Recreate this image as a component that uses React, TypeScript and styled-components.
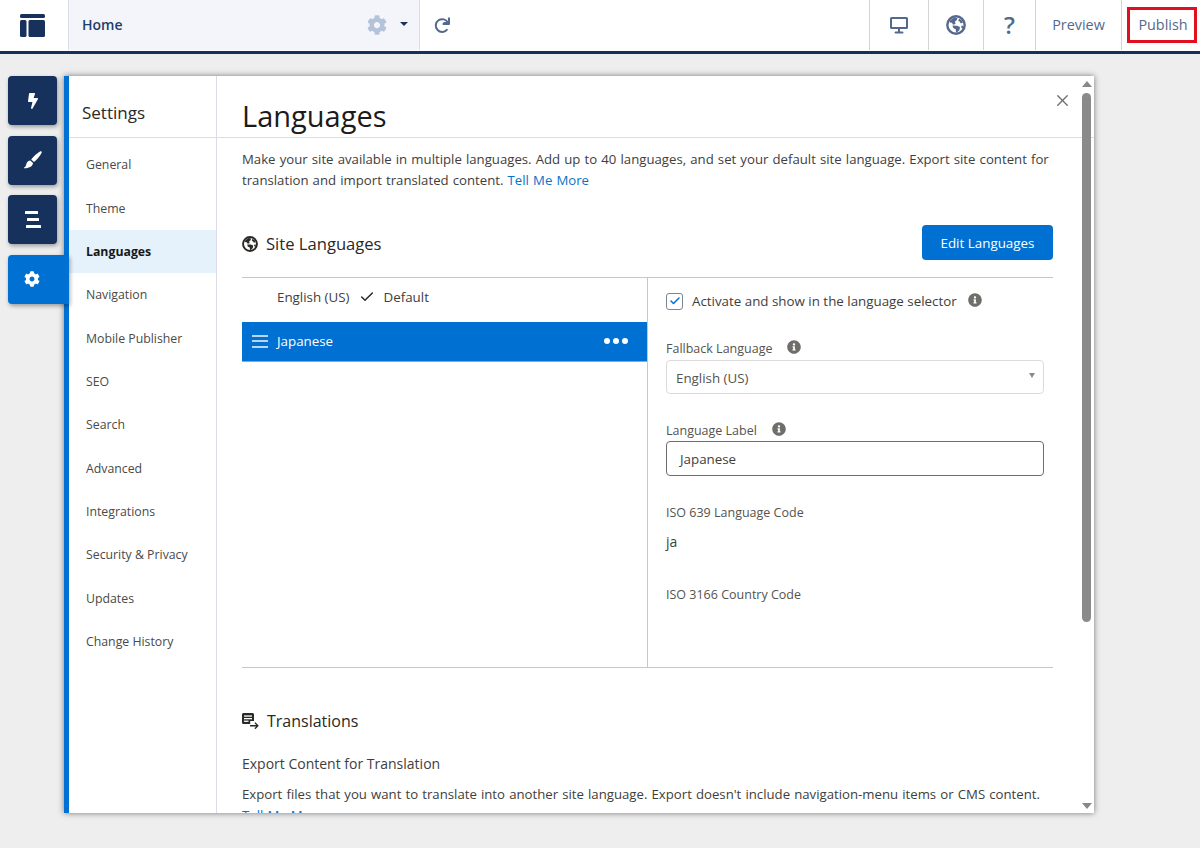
import React from 'react'
import styled, { createGlobalStyle } from 'styled-components'
import { FaBolt, FaCog, FaInfoCircle } from 'react-icons/fa'
import { Check, X } from 'lucide-react'

const GlobalStyle = createGlobalStyle`
  html, body {
    margin: 0;
    padding: 0;
    background: #eeeeee;
    font-family: "Open Sans", "Noto Sans", sans-serif;
    color: #3e3e3c;
  }
  * { box-sizing: border-box; }
`

const navItems = [
  'General',
  'Theme',
  'Languages',
  'Navigation',
  'Mobile Publisher',
  'SEO',
  'Search',
  'Advanced',
  'Integrations',
  'Security & Privacy',
  'Updates',
  'Change History',
]

function LayoutLogo() {
  return (
    <svg width="25" height="23" viewBox="0 0 25 23" fill="#16325c">
      <rect x="0" y="0" width="25" height="4" rx="1.5" />
      <rect x="0" y="6" width="6.5" height="17" rx="1.5" />
      <rect x="8.5" y="6" width="16.5" height="17" rx="1.5" />
    </svg>
  )
}

function RedoIcon() {
  return (
    <svg width="17" height="17" viewBox="0 0 17 17" fill="none" stroke="#54698d" strokeWidth="2">
      <path d="M13.4 12.2A6.400 6.400 0 1 1 14 6H9.500" />
      <path d="M15 1.200V7H9.400" strokeLinecap="round" strokeLinejoin="round" />
    </svg>
  )
}

function GlobeIcon({ size, color }: { size: number; color: string }) {
  return (
    <svg width={size} height={size} viewBox="0 0 20 20" fill={color}>
      <circle cx="10" cy="10" r="8.700" fill="none" stroke={color} strokeWidth="2.400" />
      <path d="M4 5.500L8 2.500l3.500.5-1 2.500L9 6.500 9.500 9 7 9.800l-1-2-2.500-.3z" />
      <path d="M13 3.500l3.500 2.500.2 2-2.200.2-.7-1.700-1.500-.3z" />
      <path d="M6.500 10.500l4.500.2 3 1.300-.5 3-2.500 2.500-1-.2-.3-3-2.500-1.200z" />
      <path d="M15.500 10.500l2 .5-.8 3-1.500-1.500z" />
    </svg>
  )
}

function MonitorIcon() {
  return (
    <svg width="18" height="17" viewBox="0 0 18 17" fill="#54698d">
      <path d="M1.500 0h15A1.500 1.500 0 0 1 18 1.500v9a1.500 1.500 0 0 1-1.500 1.500h-15A1.500 1.500 0 0 1 0 10.500v-9A1.500 1.500 0 0 1 1.500 0zM2 2v8h14V2z" fillRule="evenodd" />
      <rect x="8" y="12" width="2" height="3" />
      <rect x="4.500" y="14.500" width="9" height="2" rx="1" />
    </svg>
  )
}

function BrushIcon() {
  return (
    <svg width="18" height="18" viewBox="0 0 18 18" fill="#fff">
      <path d="M17.400.5c.5.4.4 1.100 0 1.800-1.600 3-4.200 6.300-7.400 8.700L7.200 8.600C9.800 5.300 13.300 2.200 16 .6c.5-.3 1-.4 1.400-.1z" />
      <path d="M6.300 9.500l2.700 2.400c-.2 2.900-3 5.100-8.600 5.300-.5 0-.6-.5-.2-.8 1.800-1.100 1.700-2.400 2.300-4 .6-1.600 2-2.700 3.800-2.900z" />
    </svg>
  )
}

function StackIcon() {
  return (
    <svg width="16" height="17" viewBox="0 0 16 17" fill="#fff">
      <rect x="0" y="0" width="13" height="3" rx="0.5" />
      <rect x="2" y="7" width="12" height="3" rx="0.5" />
      <rect x="1" y="14" width="15" height="3" rx="0.5" />
    </svg>
  )
}

function TranslateIcon() {
  return (
    <svg width="17" height="16" viewBox="0 0 17 16" fill="#2b2826">
      <path d="M1.500 0h9A1.500 1.500 0 0 1 12 1.500V8H8.200v3H1.500A1.500 1.500 0 0 1 0 9.500v-8A1.500 1.500 0 0 1 1.500 0z" />
      <rect x="2" y="2.400" width="8" height="1.300" fill="#fff" />
      <rect x="2" y="5" width="8" height="1.300" fill="#fff" />
      <rect x="2" y="7.600" width="4.500" height="1.300" fill="#fff" />
      <path d="M8 12h6.200l-1.800-1.900 1-.9 3.400 3.500-3.400 3.500-1-.9 1.800-1.900H8z" />
    </svg>
  )
}

function Info() {
  return (
    <InfoMark>
      <FaInfoCircle size={14} />
    </InfoMark>
  )
}

export default function App() {
  return (
    <Page>
      <GlobalStyle />
      <TopBar>
        <LogoCell>
          <LayoutLogo />
        </LogoCell>
        <HomeCell>
          <HomeTitle>Home</HomeTitle>
          <FaCog size={20} color="#b4c3d9" />
          <Caret />
        </HomeCell>
        <RedoCell>
          <RedoIcon />
        </RedoCell>
        <BarSpacer />
        <BarCell $width={59}>
          <MonitorIcon />
        </BarCell>
        <BarCell $width={55}>
          <GlobeIcon size={20} color="#54698d" />
        </BarCell>
        <BarCell $width={52}>
          <QuestionMark>?</QuestionMark>
        </BarCell>
        <BarCell $width={86}>
          <BarLabel>Preview</BarLabel>
        </BarCell>
        <PublishCell>
          <PublishBox>
            <BarLabel>Publish</BarLabel>
          </PublishBox>
        </PublishCell>
      </TopBar>

      <Workspace>
        <TabRail>
          <RailTab>
            <FaBolt size={16} color="#fff" />
          </RailTab>
          <RailTab>
            <BrushIcon />
          </RailTab>
          <RailTab>
            <StackIcon />
          </RailTab>
          <RailTab $active>
            <FaCog size={16} color="#fff" />
          </RailTab>
        </TabRail>

        <Panel>
          <SideNav>
            <SideTitle>Settings</SideTitle>
            <NavList>
              {navItems.map((item) => (
                <NavItem key={item} $active={item === 'Languages'}>
                  {item}
                </NavItem>
              ))}
            </NavList>
          </SideNav>

          <Main>
            <PageHeader>
              <PageTitle>Languages</PageTitle>
              <CloseButton>
                <X size={19} strokeWidth={1.7} color="#706e6b" />
              </CloseButton>
            </PageHeader>
            <Body>
              <Intro>
                Make your site available in multiple languages. Add up to 40 languages, and set your default site
                language. Export site content for translation and import translated content.{' '}
                <TextLink>Tell Me More</TextLink>
              </Intro>

              <SectionHeader>
                <SectionTitle>
                  <GlobeIcon size={16} color="#2b2826" />
                  Site Languages
                </SectionTitle>
                <PrimaryButton>Edit Languages</PrimaryButton>
              </SectionHeader>

              <LanguageGrid>
                <LanguageList>
                  <DefaultRow>
                    English (US)
                    <Check size={16} strokeWidth={2.2} color="#2b2826" />
                    Default
                  </DefaultRow>
                  <SelectedRow>
                    <DragHandle>
                      <span />
                      <span />
                      <span />
                    </DragHandle>
                    <SelectedName>Japanese</SelectedName>
                    <Dots>
                      <span />
                      <span />
                      <span />
                    </Dots>
                  </SelectedRow>
                </LanguageList>

                <DetailPane>
                  <CheckRow>
                    <CheckBox>
                      <Check size={12} strokeWidth={3} color="#0070d2" />
                    </CheckBox>
                    <CheckText>Activate and show in the language selector</CheckText>
                    <Info />
                  </CheckRow>

                  <FallbackLabel>
                    Fallback Language
                    <Info />
                  </FallbackLabel>
                  <SelectBox>
                    English (US)
                    <SelectCaret />
                  </SelectBox>

                  <LabelRow>
                    Language Label
                    <Info />
                  </LabelRow>
                  <TextField>Japanese</TextField>

                  <IsoLabel>ISO 639 Language Code</IsoLabel>
                  <IsoValue>ja</IsoValue>
                  <IsoCountry>ISO 3166 Country Code</IsoCountry>
                </DetailPane>
              </LanguageGrid>

              <TranslationsTitle>
                <TranslateIcon />
                Translations
              </TranslationsTitle>
              <ExportTitle>Export Content for Translation</ExportTitle>
              <ExportText>
                Export files that you want to translate into another site language. Export doesn't include
                navigation-menu items or CMS content. <TextLink>Tell Me More</TextLink>
              </ExportText>
            </Body>
          </Main>

          <ScrollBar>
            <ScrollUp />
            <ScrollThumb />
            <ScrollDown />
          </ScrollBar>
        </Panel>
      </Workspace>
    </Page>
  )
}

const Page = styled.div`
  width: 1200px;
  height: 848px;
  overflow: hidden;
  background: #eeeeee;
`

const TopBar = styled.header`
  display: flex;
  height: 54px;
  padding-bottom: 1px;
  background: #fff;
  border-bottom: 3px solid #16325c;
`

const LogoCell = styled.div`
  display: flex;
  align-items: center;
  justify-content: center;
  width: 69px;
  padding-right: 4px;
  border-right: 1px solid #d8dde6;
`

const HomeCell = styled.div`
  display: flex;
  align-items: center;
  width: 351px;
  padding: 0 11px 0 13px;
  background: #f3f5fa;
  border-right: 1px solid #d8dde6;
`

const HomeTitle = styled.span`
  flex: 1;
  padding-bottom: 2px;
  font-size: 14px;
  font-weight: 600;
  color: #1f3d69;
`

const Caret = styled.span`
  width: 0;
  height: 0;
  margin-left: 13px;
  margin-top: -3px;
  border-left: 4px solid transparent;
  border-right: 4px solid transparent;
  border-top: 4px solid #16325c;
`

const RedoCell = styled.div`
  display: flex;
  align-items: center;
  padding-left: 14px;
  width: 44px;
`

const BarSpacer = styled.div`
  flex: 1;
`

const BarCell = styled.div<{ $width: number }>`
  display: flex;
  align-items: center;
  justify-content: center;
  width: ${(p) => p.$width}px;
  border-left: 1px solid #d4d4d4;
`

const BarLabel = styled.span`
  padding-bottom: 2px;
  font-size: 14.4px;
  color: #54698d;
`

const QuestionMark = styled.span`
  font-size: 24px;
  font-weight: 600;
  line-height: 1;
  color: #54698d;
`

const PublishCell = styled.div`
  display: flex;
  align-items: center;
  justify-content: flex-end;
  width: 79px;
  padding-right: 3px;
  border-left: 1px solid #d4d4d4;
`

const PublishBox = styled.div`
  display: flex;
  align-items: center;
  justify-content: center;
  width: 70px;
  height: 36px;
  padding-left: 2px;
  border: 3px solid #e01020;
`

const Workspace = styled.div`
  display: flex;
  padding: 22px 0 0 8px;
`

const TabRail = styled.nav`
  position: relative;
  z-index: 1;
  display: flex;
  flex-direction: column;
  gap: 10.5px;
  width: 56px;
`

const RailTab = styled.div<{ $active?: boolean }>`
  display: flex;
  align-items: center;
  justify-content: center;
  width: ${(p) => (p.$active ? '61px' : '49px')};
  height: 49px;
  padding-right: ${(p) => (p.$active ? '13px' : '0')};
  background: ${(p) => (p.$active ? '#0070d2' : '#16325c')};
  border-radius: ${(p) => (p.$active ? '4px 0 0 4px' : '4px')};
  box-shadow: 1px 2px 4px rgba(0, 0, 0, 0.35);
`

const Panel = styled.section`
  position: relative;
  display: flex;
  width: 1030px;
  height: 737px;
  overflow: hidden;
  background: #fff;
  border-left: 5px solid #0070d2;
  box-shadow: 0 0 6px rgba(0, 0, 0, 0.5);
`

const SideNav = styled.aside`
  flex: none;
  width: 148px;
  border-right: 1px solid #dddbe5;
`

const SideTitle = styled.div`
  display: flex;
  align-items: center;
  height: 62px;
  padding: 12px 0 0 13px;
  font-size: 17px;
  color: #2b2826;
  border-bottom: 1px solid #dddbe5;
`

const NavList = styled.div`
  padding-top: 5px;
`

const NavItem = styled.div<{ $active?: boolean }>`
  display: flex;
  align-items: center;
  height: 43.36px;
  padding-left: 17px;
  font-size: 12.3px;
  font-weight: ${(p) => (p.$active ? 700 : 400)};
  color: ${(p) => (p.$active ? '#181818' : '#4a4a48')};
  background: ${(p) => (p.$active ? '#e5f1fb' : 'transparent')};
`

const Main = styled.main`
  flex: 1;
  min-width: 0;
`

const PageHeader = styled.div`
  position: relative;
  height: 62px;
  padding: 20px 0 0 25px;
  border-bottom: 1px solid #dddbe5;
`

const PageTitle = styled.h1`
  margin: 0;
  font-size: 29px;
  font-weight: 400;
  line-height: 40px;
  color: #1c1b1a;
`

const CloseButton = styled.div`
  position: absolute;
  top: 15px;
  right: 22px;
  display: flex;
`

const Body = styled.div`
  width: 836px;
  padding: 11px 0 0 25px;
`

const Intro = styled.p`
  margin: 0;
  width: 811px;
  font-size: 13.2px;
  word-spacing: 0.7px;
  line-height: 21px;
  color: #3e3e3c;
`

const TextLink = styled.span`
  color: #0b72c6;
`

const SectionHeader = styled.div`
  display: flex;
  align-items: center;
  justify-content: space-between;
  height: 35px;
  margin-top: 34px;
`

const SectionTitle = styled.h2`
  display: flex;
  align-items: center;
  gap: 8px;
  margin: 2px 0 0;
  font-size: 16.6px;
  font-weight: 400;
  color: #2b2826;
`

const PrimaryButton = styled.button`
  width: 131px;
  height: 35px;
  padding: 0;
  font-family: inherit;
  font-size: 13.4px;
  color: #fff;
  background: #0070d2;
  border: none;
  border-radius: 4px;
`

const LanguageGrid = styled.div`
  display: flex;
  height: 391px;
  margin-top: 17px;
  border-top: 1px solid #c9c7c5;
  border-bottom: 1px solid #c9c7c5;
`

const LanguageList = styled.div`
  flex: none;
  width: 405px;
`

const DefaultRow = styled.div`
  display: flex;
  align-items: center;
  gap: 9px;
  height: 44px;
  padding: 0 0 6px 35px;
  font-size: 13.35px;
  color: #3e3e3c;
`

const SelectedRow = styled.div`
  display: flex;
  align-items: center;
  height: 40px;
  padding: 0 19px 1px 10px;
  background: #0070d2;
  border-bottom: 1px solid #6eb2ea;
`

const DragHandle = styled.div`
  display: flex;
  flex-direction: column;
  gap: 3.5px;
  width: 25px;

  span {
    width: 16px;
    height: 2px;
    background: #b7d6f2;
  }
`

const SelectedName = styled.span`
  flex: 1;
  font-size: 13.35px;
  color: #fff;
`

const Dots = styled.div`
  display: flex;
  gap: 3px;

  span {
    width: 6px;
    height: 6px;
    border-radius: 50%;
    background: #fff;
  }
`

const DetailPane = styled.div`
  flex: 1;
  padding: 14px 9px 0 18px;
  border-left: 1px solid #c9c7c5;
`

const CheckRow = styled.div`
  display: flex;
  align-items: center;
  height: 18px;
`

const CheckBox = styled.span`
  display: flex;
  align-items: center;
  justify-content: center;
  width: 17px;
  height: 17px;
  border: 1px solid #7b8794;
  border-radius: 3px;
`

const CheckText = styled.span`
  margin: 0 11px 0 9px;
  font-size: 13.35px;
  color: #3e3e3c;
`

const InfoMark = styled.span`
  display: inline-flex;
  margin-top: -3px;
  color: #706e6b;
`

const FieldLabel = styled.div`
  display: flex;
  align-items: center;
  font-size: 12.5px;
  color: #55534f;
`

const FallbackLabel = styled(FieldLabel)`
  gap: 15px;
  margin-top: 30px;
  height: 17px;
`

const LabelRow = styled(FieldLabel)`
  gap: 15px;
  margin-top: 28px;
  height: 17px;
`

const SelectBox = styled.div`
  position: relative;
  display: flex;
  align-items: center;
  height: 34px;
  margin-top: 3px;
  padding: 1px 0 0 9px;
  font-size: 13.35px;
  color: #55534f;
  border: 1px solid #dddbda;
  border-radius: 4px;
`

const SelectCaret = styled.span`
  position: absolute;
  top: 12px;
  right: 8px;
  border-left: 3.5px solid transparent;
  border-right: 3.5px solid transparent;
  border-top: 5px solid #8a8a8a;
`

const TextField = styled.div`
  display: flex;
  align-items: center;
  height: 35px;
  margin-top: 2px;
  padding-left: 13px;
  font-size: 13.35px;
  color: #3e3e3c;
  border: 1px solid #706e6b;
  border-radius: 4px;
`

const IsoLabel = styled(FieldLabel)`
  margin-top: 28px;
  height: 17px;
`

const IsoValue = styled.div`
  margin-top: 11px;
  height: 20px;
  font-size: 14px;
  color: #3e3e3c;
`

const IsoCountry = styled(FieldLabel)`
  margin-top: 34px;
  height: 17px;
`

const TranslationsTitle = styled(SectionTitle)`
  margin-top: 40px;
  height: 25px;
  font-size: 16px;
`

const ExportTitle = styled.div`
  margin-top: 21px;
  font-size: 14px;
  line-height: 20px;
  color: #3e3e3c;
`

const ExportText = styled.p`
  margin: 10px 0 0;
  width: 811px;
  font-size: 13.2px;
  word-spacing: 0.7px;
  line-height: 21px;
  color: #3e3e3c;
`

const ScrollBar = styled.div`
  position: absolute;
  left: 1013px;
  top: 5px;
  display: flex;
  flex-direction: column;
  align-items: center;
  width: 9px;
  height: 728px;
`

const ScrollUp = styled.span`
  border-left: 5px solid transparent;
  border-right: 5px solid transparent;
  border-bottom: 6px solid #888;
`

const ScrollThumb = styled.span`
  width: 9px;
  height: 529px;
  margin-top: 6px;
  background: #8a8a8a;
  border-radius: 5px;
`

const ScrollDown = styled.span`
  margin-top: auto;
  border-left: 5px solid transparent;
  border-right: 5px solid transparent;
  border-top: 6px solid #888;
`
